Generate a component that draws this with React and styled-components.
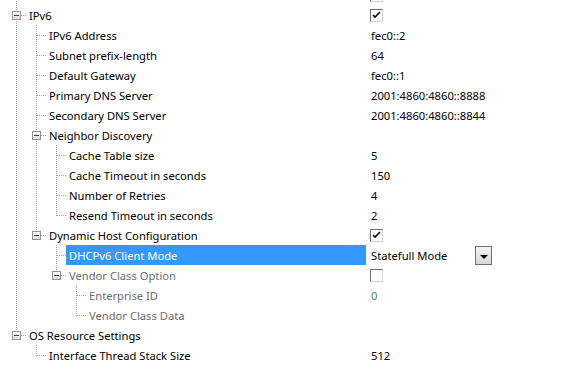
import React from 'react';
import styled, { createGlobalStyle } from 'styled-components';

const GlobalStyle = createGlobalStyle`
  html, body {
    margin: 0;
    padding: 0;
    background: #fff;
    overflow: hidden;
  }
  body {
    font-family: 'Noto Sans', 'Open Sans', sans-serif;
    font-size: 11.2px;
  }
`;

const rows = [
  { depth: 0, label: '', guides: [], value: { kind: 'check', checked: false } },
  { depth: 0, label: 'IPv6', guides: [], expander: true, value: { kind: 'check', checked: true } },
  { depth: 1, label: 'IPv6 Address', guides: [true], value: { kind: 'text', text: 'fec0::2' } },
  { depth: 1, label: 'Subnet prefix-length', guides: [true], value: { kind: 'text', text: '64' } },
  { depth: 1, label: 'Default Gateway', guides: [true], value: { kind: 'text', text: 'fec0::1' } },
  { depth: 1, label: 'Primary DNS Server', guides: [true], value: { kind: 'text', text: '2001:4860:4860::8888' } },
  { depth: 1, label: 'Secondary DNS Server', guides: [true], value: { kind: 'text', text: '2001:4860:4860::8844' } },
  { depth: 1, label: 'Neighbor Discovery', guides: [true], expander: true },
  { depth: 2, label: 'Cache Table size', guides: [true, true], value: { kind: 'text', text: '5' } },
  { depth: 2, label: 'Cache Timeout in seconds', guides: [true, true], value: { kind: 'text', text: '150' } },
  { depth: 2, label: 'Number of Retries', guides: [true, true], value: { kind: 'text', text: '4' } },
  { depth: 2, label: 'Resend Timeout in seconds', guides: [true, true], last: true, value: { kind: 'text', text: '2' } },
  { depth: 1, label: 'Dynamic Host Configuration', guides: [true], expander: true, last: true, value: { kind: 'check', checked: true } },
  { depth: 2, label: 'DHCPv6 Client Mode', guides: [true, false], selected: true, value: { kind: 'select', text: 'Statefull Mode' } },
  { depth: 2, label: 'Vendor Class Option', guides: [true, false], expander: true, last: true, disabled: true, value: { kind: 'check', checked: false } },
  { depth: 3, label: 'Enterprise ID', guides: [true, false, false], disabled: true, value: { kind: 'text', text: '0' } },
  { depth: 3, label: 'Vendor Class Data', guides: [true, false, false], last: true, disabled: true },
  { depth: 0, label: 'OS Resource Settings', guides: [], expander: true, last: true },
  { depth: 1, label: 'Interface Thread Stack Size', guides: [false], last: true, value: { kind: 'text', text: '512' } },
];

const LINE = '#a0a0a0';

const Guide = ({ on }) => (
  <TreeGlyph viewBox="0 0 20 20">
    {on && (
      <line x1="10.5" y1="0" x2="10.5" y2="20" stroke={LINE} strokeDasharray="1 1" />
    )}
  </TreeGlyph>
);

const Connector = ({ last, expander }) => (
  <TreeGlyph viewBox="0 0 20 20">
    <line x1="10.5" y1="0" x2="10.5" y2={last ? 11 : 20} stroke={LINE} strokeDasharray="1 1" />
    <line x1={expander ? 15 : 11} y1="10.5" x2="20" y2="10.5" stroke={LINE} strokeDasharray="1 1" />
    {expander && (
      <>
        <defs>
          <linearGradient id="exp" x1="0" y1="0" x2="0" y2="1">
            <stop offset="0" stopColor="#ffffff" />
            <stop offset="1" stopColor="#dcdcdc" />
          </linearGradient>
        </defs>
        <rect x="6.5" y="6.5" width="8" height="8" fill="url(#exp)" stroke="#919191" />
        <line x1="8" y1="10.5" x2="13" y2="10.5" stroke="#3c3c3c" />
      </>
    )}
  </TreeGlyph>
);

const CheckBox = ({ checked, disabled }) => (
  <Box $disabled={disabled}>
    {checked && (
      <svg width="9" height="8" viewBox="0 0 9 8">
        <path d="M1 4 L3 6 L8 1" fill="none" stroke="#000" strokeWidth="1.6" />
      </svg>
    )}
  </Box>
);

const Value = ({ value, disabled }) => {
  if (!value) return null;
  if (value.kind === 'check') return <CheckBox checked={value.checked} disabled={disabled} />;
  if (value.kind === 'select')
    return (
      <Select>
        <ValueText>{value.text}</ValueText>
        <DropButton>
          <Arrow />
        </DropButton>
      </Select>
    );
  return <ValueText>{value.text}</ValueText>;
};

export default function App() {
  return (
    <>
      <GlobalStyle />
      <Grid>
        {rows.map((row, i) => (
          <Row key={i} $disabled={row.disabled}>
            <NameCell>
              {row.guides.map((g, k) => (
                <Guide key={k} on={g} />
              ))}
              <Connector last={row.last} expander={row.expander} />
              <Label $selected={row.selected}>{row.label}</Label>
            </NameCell>
            <ValueCell>
              <Value value={row.value} disabled={row.disabled} />
            </ValueCell>
          </Row>
        ))}
      </Grid>
    </>
  );
}

const Grid = styled.div`
  display: flex;
  flex-direction: column;
  margin-top: -15px;
`;

const Row = styled.div`
  display: grid;
  grid-template-columns: 366px 1fr;
  height: 20px;
  line-height: 20px;
  color: ${({ $disabled }) => ($disabled ? '#6d6d6d' : '#000')};
`;

const NameCell = styled.div`
  display: flex;
  align-items: stretch;
  padding-left: 6px;
  min-width: 0;
`;

const TreeGlyph = styled.svg`
  width: 20px;
  height: 20px;
  flex: none;
  shape-rendering: crispEdges;
`;

const Label = styled.div`
  flex: 1;
  padding: 1px 0 0 3px;
  height: 19px;
  line-height: 19px;
  white-space: nowrap;
  overflow: hidden;
  background: ${({ $selected }) => ($selected ? '#3399ff' : 'transparent')};
  color: ${({ $selected }) => ($selected ? '#fff' : 'inherit')};
`;

const ValueCell = styled.div`
  display: flex;
  align-items: center;
  padding-left: 5px;
  white-space: nowrap;
`;

const ValueText = styled.span`
  padding-top: 1px;
`;

const Box = styled.span`
  width: 11px;
  height: 11px;
  margin-left: -1px;
  display: flex;
  align-items: center;
  justify-content: center;
  background: #fff;
  border: 1px solid;
  border-color: #6e6e6e #d4d4d4 #d4d4d4 #6e6e6e;
  svg {
    display: block;
  }
`;

const Select = styled.div`
  display: flex;
  align-items: center;
  justify-content: space-between;
  width: 121px;
`;

const DropButton = styled.span`
  box-sizing: border-box;
  width: 17px;
  height: 19px;
  display: flex;
  align-items: center;
  justify-content: center;
  border: 1px solid #707070;
  background: linear-gradient(#f4f4f4, #d8d8d8);
`;

const Arrow = styled.span`
  width: 0;
  height: 0;
  border-left: 4px solid transparent;
  border-right: 4px solid transparent;
  border-top: 4px solid #000;
  margin-top: 2px;
`;
